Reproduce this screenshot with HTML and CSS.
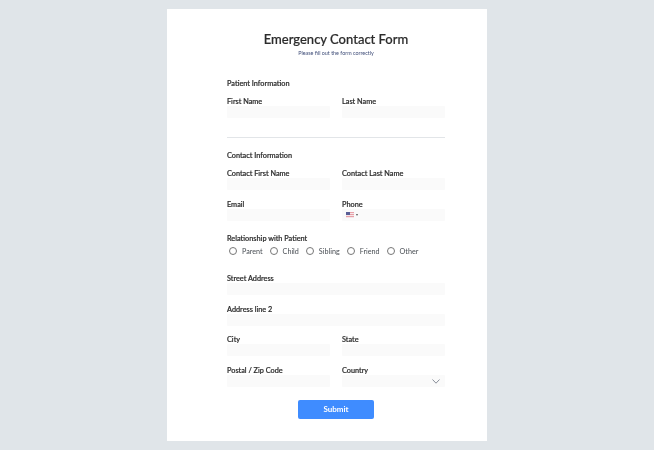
FILE: index.html
```html
<!DOCTYPE html>
<html lang="en">
<head>
  <meta charset="UTF-8">
  <title>Emergency Contact Form</title>
  <link rel="stylesheet" href="styles.css">
</head>
<body>

  <form class="card">
    <h1>Emergency Contact Form</h1>
    <p class="subtitle">Please fill out the form correctly</p>

    <!-- Patient -->
    <h2 class="section first">Patient Information</h2>
    <div class="row">
      <div class="field"><label>First Name</label><div class="input"></div></div>
      <div class="field"><label>Last Name</label><div class="input"></div></div>
    </div>

    <hr class="divider">

    <!-- Contact -->
    <h2 class="section">Contact Information</h2>
    <div class="row">
      <div class="field"><label>Contact First Name</label><div class="input"></div></div>
      <div class="field"><label>Contact Last Name</label><div class="input"></div></div>
    </div>
    <div class="row">
      <div class="field"><label>Email</label><div class="input"></div></div>
      <div class="field">
        <label>Phone</label>
        <div class="input phone">
          <svg class="flag" width="8" height="6" viewBox="0 0 8 6">
            <rect width="8" height="6" fill="#e8a0a8"/>
            <rect y="1" width="8" height="1" fill="#f4e6e8"/>
            <rect y="3" width="8" height="1" fill="#f4e6e8"/>
            <rect y="5" width="8" height="1" fill="#f4e6e8"/>
            <rect width="4" height="3" fill="#5a5f96"/>
          </svg>
          <span class="caret"></span>
        </div>
      </div>
    </div>

    <div class="relationship">
      <label>Relationship with Patient</label>
      <div class="radios">
        <span class="radio"><i></i><span class="radio-text">Parent</span></span>
        <span class="radio"><i></i><span class="radio-text">Child</span></span>
        <span class="radio"><i></i><span class="radio-text">Sibling</span></span>
        <span class="radio"><i></i><span class="radio-text">Friend</span></span>
        <span class="radio"><i></i><span class="radio-text">Other</span></span>
      </div>
    </div>

    <div class="row"><div class="field"><label>Street Address</label><div class="input"></div></div></div>
    <div class="row"><div class="field"><label>Address line 2</label><div class="input"></div></div></div>
    <div class="row">
      <div class="field"><label>City</label><div class="input"></div></div>
      <div class="field"><label>State</label><div class="input"></div></div>
    </div>
    <div class="row">
      <div class="field"><label>Postal / Zip Code</label><div class="input"></div></div>
      <div class="field">
        <label>Country</label>
        <div class="input select">
          <svg width="8" height="5" viewBox="0 0 8 5"><path d="M0.5 0.5L4 4.2L7.5 0.5" fill="none" stroke="#6b7280" stroke-width="0.8"/></svg>
        </div>
      </div>
    </div>

    <button type="button" class="submit"><span class="submit-text">Submit</span></button>
  </form>

</body>
</html>
```

FILE: styles.css
```css
body {
  margin: 0;
  padding: 9px 0;
  background-color: #e0e5e9;
  font-family: Lato, "Liberation Sans", sans-serif;
  color: #2c2c2c;
}

.card {
  width: 218px;
  height: 432px;
  margin: 0 auto;
  padding: 0 42px 0 60px;
  background: white;
  display: flex;
  flex-direction: column;
}

/* grey text edges instead of coloured ones */
h1, .subtitle, .section, label, .radio-text, .submit-text {
  will-change: opacity;
}

h1, .section, label {
  -webkit-text-stroke: 0.2px;
}

h1 {
  margin: 21px 0 0;
  height: 18px;
  font-size: 13px;
  line-height: 18px;
  font-weight: 500;
  text-align: center;
  white-space: nowrap;
}

.subtitle {
  margin: 1px 0 0;
  height: 8px;
  font-size: 5.4px;
  line-height: 8px;
  text-align: center;
  color: #3f4d78;
}

.section {
  margin: 0;
  height: 10px;
  font-size: 7.3px;
  line-height: 12px;
  font-weight: 500;
}

.section.first {
  margin-top: 21px;
}

.row {
  display: flex;
  gap: 12px;
  margin-bottom: 8.7px;
}

.section + .row {
  margin-top: 8px;
}

.field {
  flex: 1;
}

label {
  display: block;
  height: 10px;
  font-size: 7.3px;
  line-height: 12px;
  font-weight: 500;
}

.input {
  height: 12px;
  background-color: #fafafa;
  border-radius: 1px;
}

.phone {
  display: flex;
  align-items: center;
  padding-left: 4px;
}

.flag {
  display: block;
}

.caret {
  margin-left: 2px;
  border-left: 1.5px solid transparent;
  border-right: 1.5px solid transparent;
  border-top: 2px solid #555;
}

.select {
  display: flex;
  align-items: center;
  justify-content: flex-end;
  padding-right: 5px;
}

.divider {
  width: 100%;
  margin: 10.3px 0 12px;
  border: none;
  border-top: 1px solid #e2e5e8;
}

.relationship {
  margin: 3.6px 0 16px;
}

.relationship label {
  height: 13px;
}

.radios {
  display: flex;
  gap: 7px;
  padding-left: 2px;
}

.radio {
  display: flex;
  align-items: center;
  gap: 5px;
  height: 11px;
  font-size: 7.2px;
  color: #4a4f55;
}

.radio i {
  box-sizing: border-box;
  width: 8px;
  height: 8px;
  border: 0.7px solid #777;
  border-radius: 50%;
}

.submit {
  align-self: center;
  width: 76px;
  height: 19px;
  margin-top: 4.2px;
  padding: 0;
  border: none;
  border-radius: 2px;
  background-color: #3f8cff;
  color: white;
  font-family: inherit;
  font-size: 8px;
  font-weight: 700;
  cursor: pointer;
}
```
